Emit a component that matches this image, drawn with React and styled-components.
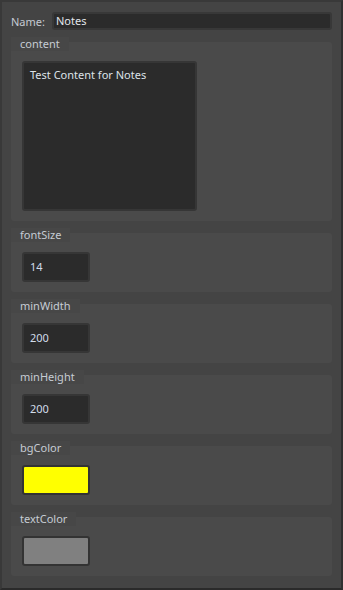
import React from "react";
import styled, { createGlobalStyle } from "styled-components";

const Global = createGlobalStyle`
  html, body, #root { margin: 0; height: 100%; }
  body {
    background: #2c2c2c;
    font-family: "Noto Sans", "Open Sans", sans-serif;
    font-size: 11px;
  }
`;

const fields = [
  { name: "fontSize", kind: "number", value: "14" },
  { name: "minWidth", kind: "number", value: "200" },
  { name: "minHeight", kind: "number", value: "200" },
  { name: "bgColor", kind: "color", value: "#ffff00" },
  { name: "textColor", kind: "color", value: "#808080" },
];

export default function App() {
  return (
    <>
      <Global />
      <Panel>
        <NameRow>
          <NameLabel>Name:</NameLabel>
          <NameInput>Notes</NameInput>
        </NameRow>

        {/* content is a multiline field */}
        <Section>
          <Legend>content</Legend>
          <TextArea>Test Content for Notes</TextArea>
        </Section>

        {fields.map((f) => (
          <Section key={f.name}>
            <Legend>{f.name}</Legend>
            {f.kind === "color" ? (
              <Swatch $color={f.value} />
            ) : (
              <NumberBox>{f.value}</NumberBox>
            )}
          </Section>
        ))}
      </Panel>
    </>
  );
}

const Panel = styled.div`
  box-sizing: border-box;
  min-height: 100%;
  background: #444444;
  border: 2px solid #393939;
  border-right-color: #303030;
  border-bottom-color: #2a2a2a;
  padding: 10px 9px 10px 9px;
  display: flex;
  flex-direction: column;
  gap: 12px;
`;

const NameRow = styled.div`
  display: flex;
  align-items: center;
  gap: 7px;
  height: 18px;
`;

const NameLabel = styled.span`
  color: #c4cad2;
`;

const NameInput = styled.div`
  flex: 1;
  box-sizing: border-box;
  height: 18px;
  line-height: 14px;
  padding: 0 2px;
  background: #2b2b2b;
  border: 2px solid #383838;
  border-radius: 3px;
  color: #e2e6ea;
`;

const Section = styled.div`
  background: #4a4a4a;
  border-radius: 3px;
  padding: 0 11px 10px;
  display: flex;
  flex-direction: column;
  align-items: flex-start;
`;

const Legend = styled.div`
  margin: -5px 0 10px -11px;
  padding: 0 9px;
  height: 14px;
  line-height: 14px;
  background: #474747;
  color: #c6ccd4;
`;

const TextArea = styled.div`
  box-sizing: border-box;
  width: 175px;
  height: 150px;
  padding: 4px 6px;
  background: #2b2b2b;
  border: 2px solid #363636;
  border-radius: 3px;
  color: #dde2e8;
`;

const NumberBox = styled.div`
  box-sizing: border-box;
  width: 68px;
  height: 30px;
  line-height: 26px;
  padding: 0 6px;
  background: #2b2b2b;
  border: 2px solid #363636;
  border-radius: 3px;
  color: #d2dcea;
`;

const Swatch = styled.div`
  box-sizing: border-box;
  width: 68px;
  height: 30px;
  background: ${(p) => p.$color};
  border: 2px solid #333333;
  border-radius: 3px;
`;
